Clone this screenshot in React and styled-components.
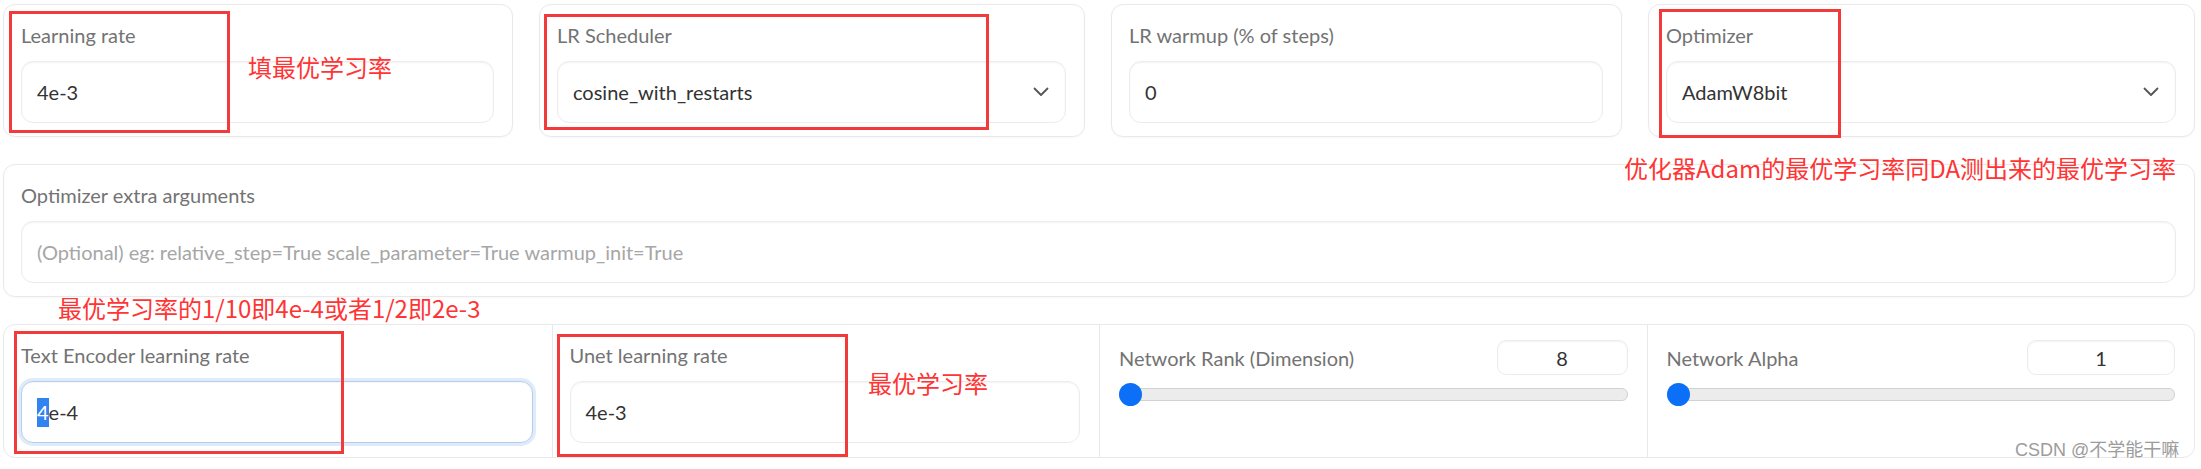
import React from 'react';
import styled, { createGlobalStyle } from 'styled-components';

const GlobalStyle = createGlobalStyle`
  body {
    margin: 0;
    background: #fff;
    font-family: Lato, "Noto Sans", sans-serif;
  }
`;

const Page = styled.div`
  position: relative;
  width: 2201px;
  height: 469px;
  box-sizing: border-box;
  padding: 4px 6px 0 3px;
  display: flex;
  flex-direction: column;
  gap: 27px;
  overflow: hidden;
`;

const TopRow = styled.div`
  display: grid;
  grid-template-columns: 510fr 546fr 511fr 547fr;
  gap: 26px;
`;

const Card = styled.div`
  box-sizing: border-box;
  height: 133px;
  padding: 17px 18px 0 17px;
  border: 1px solid #e9e9e9;
  border-radius: 12px;
  background: #fff;
  box-shadow: 0 1px 2px rgba(0, 0, 0, 0.03);
`;

const Label = styled.div`
  font-size: 20px;
  line-height: 26px;
  color: #737373;
  margin-bottom: ${p => (p.$inline ? '0' : '13px')};
  white-space: nowrap;
`;

const Field = styled.div`
  box-sizing: border-box;
  height: 62px;
  display: flex;
  align-items: center;
  justify-content: space-between;
  padding: 0 16px 0 15px;
  border: 1px solid ${p => (p.$focused ? '#b5cdee' : '#ececec')};
  border-radius: 12px;
  background: #fff;
  box-shadow: ${p => (p.$focused
    ? '0 0 0 3px #e0ebf9, inset 0 1px 2px rgba(0,0,0,0.04)'
    : 'inset 0 1px 2px rgba(0,0,0,0.05)')};
  font-size: 20px;
  color: ${p => (p.$placeholder ? '#a6a6a6' : '#333')};
  white-space: nowrap;
`;

const Selected = styled.span`
  display: inline-block;
  height: 29px;
  line-height: 29px;
  background: #3282f0;
  color: #fff;
`;

const Panel = styled.div`
  display: grid;
  grid-template-columns: repeat(4, 1fr);
  height: 134px;
  box-sizing: border-box;
  border: 1px solid #e9e9e9;
  border-radius: 12px;
  overflow: hidden;
`;

const Column = styled.div`
  padding: ${p => (p.$slider ? '15px 19px 0 19px' : '17px 19px 0 17px')};
  & + & {
    border-left: 1px solid #e9e9e9;
  }
`;

const SliderHead = styled.div`
  display: flex;
  align-items: center;
  justify-content: space-between;
  height: 35px;
`;

const NumberBox = styled.div`
  box-sizing: border-box;
  width: ${p => p.$w}px;
  height: 35px;
  display: flex;
  align-items: center;
  justify-content: center;
  border: 1px solid #ececec;
  border-radius: 9px;
  box-shadow: inset 0 1px 2px rgba(0, 0, 0, 0.05);
  font-size: 20px;
  color: #333;
`;

const Track = styled.div`
  position: relative;
  height: 11px;
  margin-top: 13px;
  border-radius: 6px;
  background: #ececec;
  border: 1px solid #d2d2d2;
`;

const Thumb = styled.div`
  position: absolute;
  left: -1px;
  top: 50%;
  width: 23px;
  height: 23px;
  margin-top: -11.5px;
  border-radius: 50%;
  background: #0b6ff7;
`;

const RedBox = styled.div`
  position: absolute;
  left: ${p => p.$x}px;
  top: ${p => p.$y}px;
  width: ${p => p.$w}px;
  height: ${p => p.$h}px;
  box-sizing: border-box;
  border: 3px solid #f23a3a;
  pointer-events: none;
`;

const Note = styled.div`
  position: absolute;
  left: ${p => p.$x}px;
  top: ${p => p.$y}px;
  font-family: "Noto Sans CJK SC", sans-serif;
  font-size: 24px;
  line-height: 30px;
  color: #ff3434;
  white-space: nowrap;
`;

const Watermark = styled.div`
  position: absolute;
  left: 2015px;
  top: 438px;
  font-family: "Liberation Sans", "Noto Sans CJK SC", sans-serif;
  font-size: 18px;
  line-height: 24px;
  color: #9c9c9c;
  white-space: nowrap;
`;

const Chevron = () => (
  <svg width="16" height="10" viewBox="0 0 16 10" fill="none">
    <path d="M1.5 1.5l6.5 6.5 6.5-6.5" stroke="#555" strokeWidth="1.8" strokeLinecap="round" strokeLinejoin="round" />
  </svg>
);

const boxes = [
  { x: 9, y: 11, w: 221, h: 122 },
  { x: 544, y: 14, w: 445, h: 116 },
  { x: 1659, y: 9, w: 182, h: 129 },
  { x: 14, y: 331, w: 330, h: 123 },
  { x: 557, y: 334, w: 291, h: 123 },
];

const notes = [
  { x: 248, y: 52, text: '填最优学习率' },
  { x: 1624, y: 153, text: '优化器Adam的最优学习率同DA测出来的最优学习率' },
  { x: 58, y: 293, text: '最优学习率的1/10即4e-4或者1/2即2e-3' },
  { x: 868, y: 368, text: '最优学习率' },
];

const SliderColumn = ({ label, value, boxWidth }) => (
  <Column $slider>
    <SliderHead>
      <Label $inline>{label}</Label>
      <NumberBox $w={boxWidth}>{value}</NumberBox>
    </SliderHead>
    <Track>
      <Thumb />
    </Track>
  </Column>
);

export default function App() {
  return (
    <>
      <GlobalStyle />
      <Page>
        <TopRow>
          <Card>
            <Label>Learning rate</Label>
            <Field>4e-3</Field>
          </Card>
          <Card>
            <Label>LR Scheduler</Label>
            <Field>cosine_with_restarts<Chevron /></Field>
          </Card>
          <Card>
            <Label>LR warmup (% of steps)</Label>
            <Field>0</Field>
          </Card>
          <Card>
            <Label>Optimizer</Label>
            <Field>AdamW8bit<Chevron /></Field>
          </Card>
        </TopRow>

        <Card>
          <Label>Optimizer extra arguments</Label>
          <Field $placeholder>(Optional) eg: relative_step=True scale_parameter=True warmup_init=True</Field>
        </Card>

        <Panel>
          <Column>
            <Label>Text Encoder learning rate</Label>
            <Field $focused><span><Selected>4</Selected>e-4</span></Field>
          </Column>
          <Column>
            <Label>Unet learning rate</Label>
            <Field>4e-3</Field>
          </Column>
          <SliderColumn label="Network Rank (Dimension)" value="8" boxWidth={131} />
          <SliderColumn label="Network Alpha" value="1" boxWidth={148} />
        </Panel>

        {boxes.map((b, i) => (
          <RedBox key={i} $x={b.x} $y={b.y} $w={b.w} $h={b.h} />
        ))}
        {notes.map((n, i) => (
          <Note key={i} $x={n.x} $y={n.y}>{n.text}</Note>
        ))}
        <Watermark>CSDN @不学能干嘛</Watermark>
      </Page>
    </>
  );
}
